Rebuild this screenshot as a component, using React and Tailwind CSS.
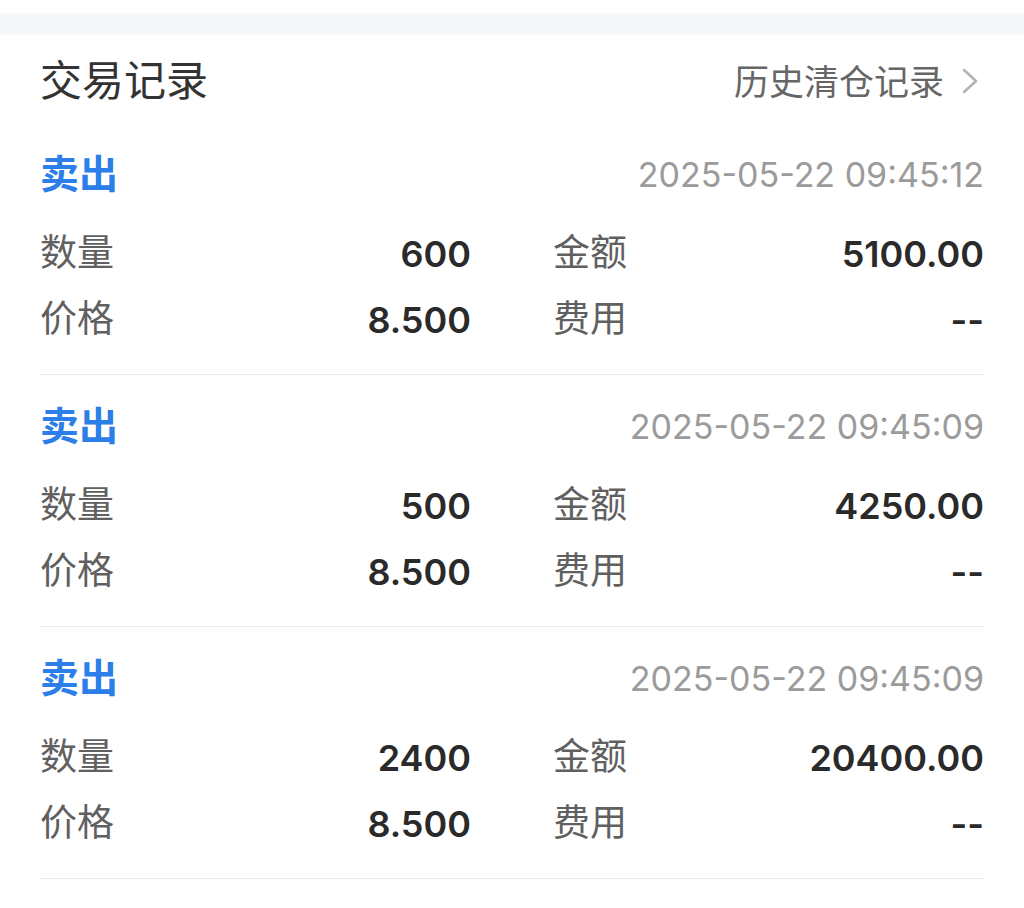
const cjk = { fontFamily: '"Noto Sans CJK SC", "Noto Sans", sans-serif' };
const num = { fontFamily: 'Inter, "Noto Sans CJK SC", sans-serif' };

const records = [
  { time: '2025-05-22 09:45:12', qty: '600', amount: '5100.00', price: '8.500', fee: '--' },
  { time: '2025-05-22 09:45:09', qty: '500', amount: '4250.00', price: '8.500', fee: '--' },
  { time: '2025-05-22 09:45:09', qty: '2400', amount: '20400.00', price: '8.500', fee: '--' },
];

const Cell = ({ label, value }) => (
  <div className="flex items-center justify-between h-[66px]">
    <span className="text-[37px] text-[#606060] leading-none mb-[7px]" style={cjk}>{label}</span>
    <span className="text-[36px] font-semibold text-[#2a2a2a] leading-none" style={num}>{value}</span>
  </div>
);

const Record = ({ r }) => (
  <div className="border-b border-[#ececec] pt-[27px] pb-[21px]">
    {/* header: side + time */}
    <div className="flex items-center justify-between h-[50px] mb-[21px]">
      <span className="text-[39px] font-semibold text-[#2c7ee8] leading-none mb-[8px]" style={cjk}>卖出</span>
      <span className="text-[34px] text-[#9b9b9b] leading-none" style={num}>{r.time}</span>
    </div>
    <div className="grid grid-cols-2 gap-x-[82px]">
      <Cell label="数量" value={r.qty} />
      <Cell label="金额" value={r.amount} />
      <Cell label="价格" value={r.price} />
      <Cell label="费用" value={r.fee} />
    </div>
  </div>
);

export default function App() {
  return (
    <div className="w-[1024px] h-[908px] bg-white overflow-hidden">
      <div className="h-[13px] bg-white" />
      <div className="h-[22px] bg-[#f6f7f9]" />
      <div className="px-10">
        {/* Title row */}
        <div className="flex items-center justify-between h-[50px] mt-[22px] mb-[16px]">
          <span className="text-[42px] text-[#333] leading-none mb-[8px]" style={cjk}>交易记录</span>
          <div className="flex items-center gap-[18px] pr-[6px]">
            <span className="text-[35px] text-[#666] leading-none mb-[6px]" style={cjk}>历史清仓记录</span>
            <svg width="16" height="26" viewBox="0 0 16 26" fill="none" className="mb-[2px]">
              <polyline points="2,2 14,13 2,24" stroke="#b3b3b3" strokeWidth="2.5" strokeLinecap="round" strokeLinejoin="round" />
            </svg>
          </div>
        </div>
        {records.map((r, i) => (
          <Record key={i} r={r} />
        ))}
      </div>
    </div>
  );
}
